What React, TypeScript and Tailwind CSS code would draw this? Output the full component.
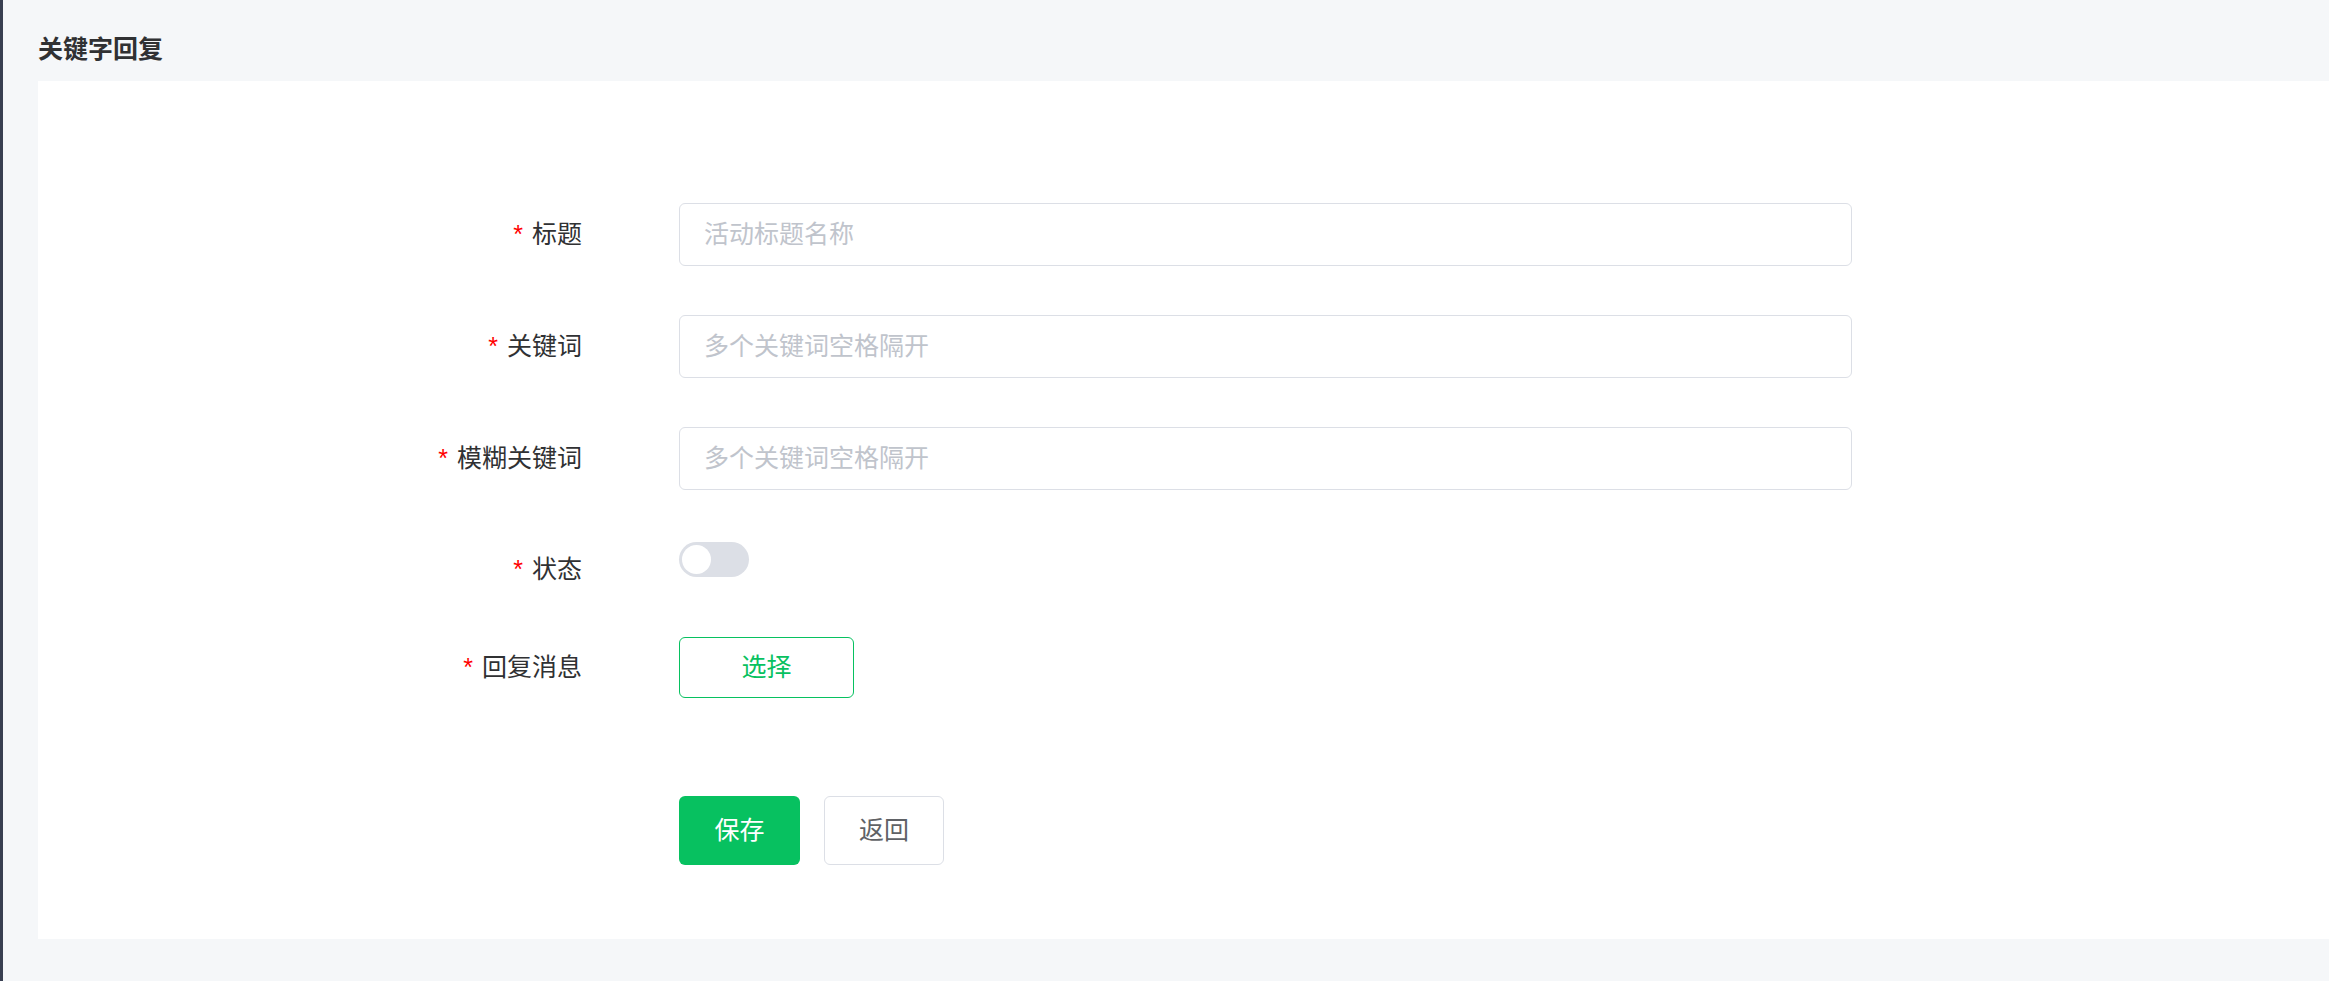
import { useState } from "react";

const FONT = {
  fontFamily: '"Liberation Sans", "Noto Sans CJK SC", sans-serif',
};

function Label({ text }: { text: string }) {
  return (
    <div className="w-[544px] shrink-0 text-right text-[25px] leading-[63px] text-[#303133]">
      <span className="mr-[9px] text-[#ff0000]">*</span>
      {text}
    </div>
  );
}

function TextInput({ placeholder }: { placeholder: string }) {
  return (
    <input
      type="text"
      placeholder={placeholder}
      className="h-[63px] w-[1173px] rounded-[6px] border border-[#dcdfe6] bg-white px-[24px] text-[25px] text-[#606266] outline-none placeholder:text-[#c0c4cc]"
      style={FONT}
    />
  );
}

export default function App() {
  const [enabled, setEnabled] = useState(false);

  return (
    <div className="flex h-screen w-full overflow-hidden" style={FONT}>
      {/* sidebar edge */}
      <div className="w-[3px] shrink-0 bg-[#383f51]" />

      <main className="flex-1 bg-[#f5f7f9]">
        <div className="h-[81px] pl-[35px] pt-[33px]">
          <h1 className="text-[25px] font-bold leading-[32px] text-[#303133]">
            关键字回复
          </h1>
        </div>

        <div className="ml-[35px] bg-white pb-[74px] pt-[122px]">
          <div className="flex items-start">
            <Label text="标题" />
            <div className="ml-[97px]">
              <TextInput placeholder="活动标题名称" />
            </div>
          </div>

          <div className="mt-[49px] flex items-start">
            <Label text="关键词" />
            <div className="ml-[97px]">
              <TextInput placeholder="多个关键词空格隔开" />
            </div>
          </div>

          <div className="mt-[49px] flex items-start">
            <Label text="模糊关键词" />
            <div className="ml-[97px]">
              <TextInput placeholder="多个关键词空格隔开" />
            </div>
          </div>

          <div className="mt-[48px] flex items-start">
            <Label text="状态" />
            <div className="ml-[97px] pt-[4px]">
              <button
                type="button"
                onClick={() => setEnabled(!enabled)}
                className={`relative block h-[35px] w-[70px] rounded-full transition-colors ${
                  enabled ? "bg-[#07c160]" : "bg-[#dcdfe6]"
                }`}
              >
                <span
                  className={`absolute top-[3px] h-[29px] w-[29px] rounded-full bg-white transition-all ${
                    enabled ? "left-[38px]" : "left-[3px]"
                  }`}
                />
              </button>
            </div>
          </div>

          <div className="mt-[35px] flex items-start">
            <Label text="回复消息" />
            <div className="ml-[97px] pt-[1px]">
              <button
                type="button"
                className="h-[61px] w-[175px] rounded-[6px] border border-[#07c160] bg-white text-[25px] text-[#07c160]"
              >
                选择
              </button>
            </div>
          </div>

          <div className="mt-[97px] flex items-start">
            <div className="w-[544px] shrink-0" />
            <div className="ml-[97px] flex gap-[24px]">
              <button
                type="button"
                className="h-[69px] w-[121px] rounded-[6px] bg-[#07c160] text-[25px] text-white"
              >
                保存
              </button>
              <button
                type="button"
                className="h-[69px] w-[120px] rounded-[6px] border border-[#dcdfe6] bg-white text-[25px] text-[#606266]"
              >
                返回
              </button>
            </div>
          </div>
        </div>
      </main>
    </div>
  );
}
